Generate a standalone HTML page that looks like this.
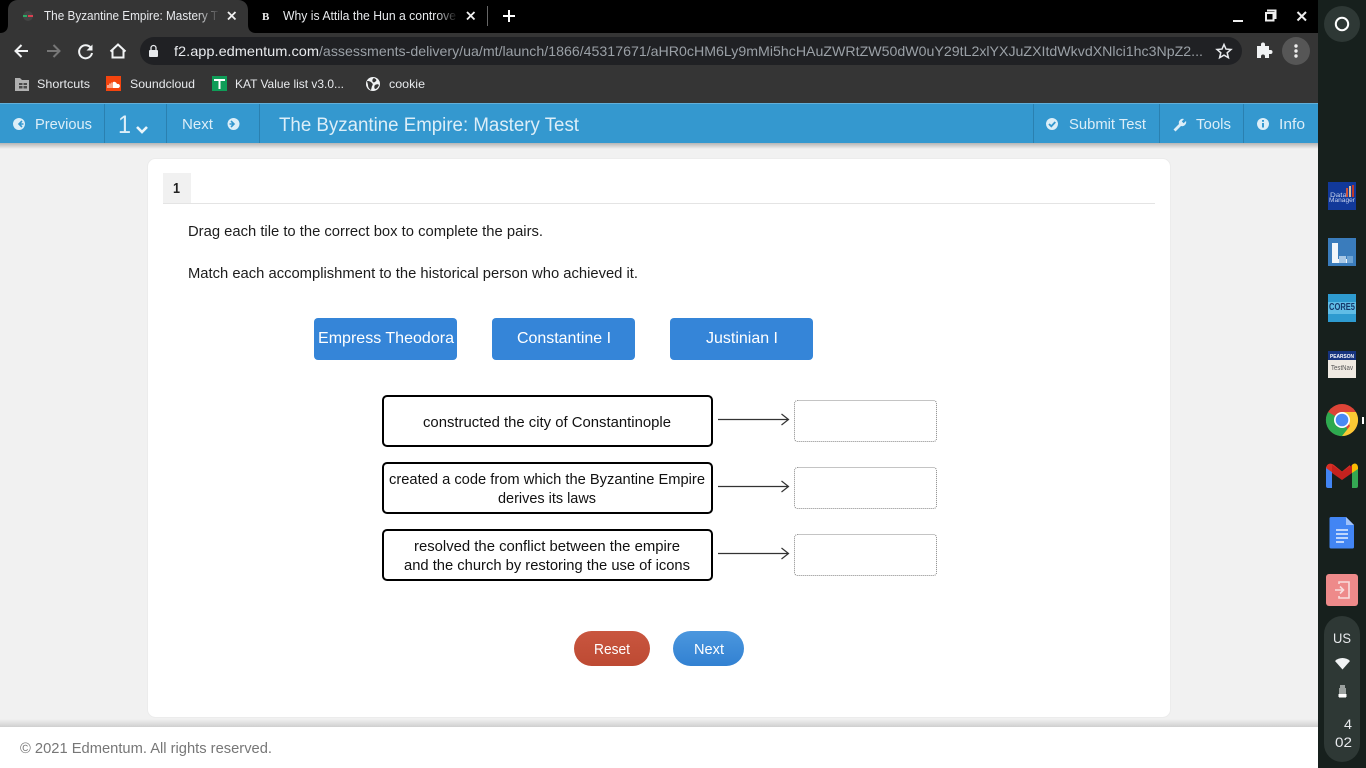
<!DOCTYPE html>
<html lang="en"><head><meta charset="utf-8"><title>The Byzantine Empire: Mastery Test</title>
<style>html,body{margin:0;padding:0;width:1366px;height:768px;overflow:hidden;background:#fff}svg{display:block}
text{font-family:"Liberation Sans",sans-serif;white-space:pre}</style></head><body>
<svg xmlns="http://www.w3.org/2000/svg" width="1366" height="768" viewBox="0 0 1366 768">
<defs>
<linearGradient id="f1" x1="0" x2="1" y1="0" y2="0"><stop offset="0" stop-color="#353535" stop-opacity="0"/><stop offset="1" stop-color="#353535"/></linearGradient>
<linearGradient id="f2" x1="0" x2="1" y1="0" y2="0"><stop offset="0" stop-color="#000" stop-opacity="0"/><stop offset="1" stop-color="#000"/></linearGradient>
<linearGradient id="rb" x1="0" x2="0" y1="0" y2="1"><stop offset="0" stop-color="#c9563f"/><stop offset="1" stop-color="#bd4a33"/></linearGradient>
<linearGradient id="nb" x1="0" x2="0" y1="0" y2="1"><stop offset="0" stop-color="#4b97de"/><stop offset="1" stop-color="#3281d2"/></linearGradient>
<linearGradient id="sh" x1="0" x2="0" y1="0" y2="1"><stop offset="0" stop-color="#b5b5b5"/><stop offset="1" stop-color="#f1f1f1"/></linearGradient>
<linearGradient id="fs" x1="0" x2="0" y1="0" y2="1"><stop offset="0" stop-color="#f1f1f1"/><stop offset="1" stop-color="#cfcfcf"/></linearGradient>
</defs>
<!-- page -->
<rect width="1318" height="768" fill="#f1f1f1"/>
<!-- chrome -->
<rect width="1318" height="33" fill="#000"/>
<rect y="33" width="1318" height="70" fill="#353535"/>
<path d="M0 33C5 33 8 30 8 25V10C8 4 12 0 18 0H238C244 0 248 4 248 10V25C248 30 251 33 256 33Z" fill="#353535"/>
<circle cx="28" cy="16" r="5" fill="#444"/><rect x="23" y="15" width="4" height="2" fill="#2fa866"/><rect x="28" y="15" width="5" height="2" fill="#d94050"/>
<text x="44" y="20" font-size="12.500" fill="#e8eaed" textLength="174" lengthAdjust="spacingAndGlyphs">The Byzantine Empire: Mastery T</text>
<rect x="197" y="6" width="23" height="20" fill="url(#f1)"/>
<path d="M228 12l7.500 7.500M235.500 12L228 19.500" stroke="#f0f0f0" stroke-width="1.800" fill="none"/>
<text x="262" y="20" font-size="11" font-weight="bold" fill="#eee" style="font-family:'Liberation Serif',serif">B</text>
<text x="283" y="20" font-size="12.500" fill="#e8eaed" textLength="173" lengthAdjust="spacingAndGlyphs">Why is Attila the Hun a controve</text>
<rect x="436" y="6" width="22" height="20" fill="url(#f2)"/>
<path d="M467 12l7.500 7.500M474.500 12L467 19.500" stroke="#f0f0f0" stroke-width="1.800" fill="none"/>
<rect x="487" y="6" width="1" height="20" fill="#666"/>
<path d="M509 10v12M503 16h12" stroke="#fff" stroke-width="2"/>
<rect x="1233" y="20" width="10" height="2" fill="#eee"/>
<path d="M1268 11.500v-1h7.500v7.500h-1.500" fill="none" stroke="#eee" stroke-width="2"/><rect x="1266" y="13" width="7.500" height="7.500" fill="none" stroke="#eee" stroke-width="2"/>
<path d="M1297.500 12l8.500 8.500M1306 12l-8.500 8.500" stroke="#eee" stroke-width="2"/>
<!-- toolbar icons -->
<path d="M28 51H16M21.500 45L15.500 51L21.500 57" fill="none" stroke="#f1f3f4" stroke-width="2"/>
<path d="M47 51H59M53.500 45L59.500 51L53.500 57" fill="none" stroke="#777" stroke-width="2"/>
<path d="M90.500 47.500A6.500 6.500 0 1 0 92 53" fill="none" stroke="#f1f3f4" stroke-width="2"/><path d="M92.500 44.500v6h-6z" fill="#f1f3f4"/>
<path d="M110.500 51.500L118 44.500L125.500 51.500M112.500 50v7.500h11V50" fill="none" stroke="#f1f3f4" stroke-width="2"/>
<rect x="140" y="37" width="1102" height="28" rx="14" fill="#202124"/>
<rect x="149" y="50" width="9" height="7" rx="1" fill="#e8eaed"/><path d="M151 50v-2a2.500 2.500 0 0 1 5 0v2" fill="none" stroke="#e8eaed" stroke-width="1.300"/>
<text x="174" y="56" font-size="14" fill="#e8eaed" textLength="145" lengthAdjust="spacingAndGlyphs">f2.app.edmentum.com</text>
<text x="319" y="56" font-size="14" fill="#9aa0a6" textLength="884" lengthAdjust="spacingAndGlyphs">/assessments-delivery/ua/mt/launch/1866/45317671/aHR0cHM6Ly9mMi5hcHAuZWRtZW50dW0uY29tL2xlYXJuZXItdWkvdXNlci1hc3NpZ2...</text>
<path d="M1224 44.500l2 4.600 5 .4-3.800 3.300 1.200 4.900-4.400-2.600-4.400 2.600 1.200-4.900-3.800-3.300 5-.4z" fill="none" stroke="#e8eaed" stroke-width="1.500"/>
<path d="M1258 47h4v-1.500a2 2 0 0 1 4 0V47h4v4h1.500a2 2 0 0 1 0 4H1270v4h-4v-1.500a2 2 0 0 0-4 0V59h-4z" fill="#f1f3f4" transform="translate(-1 -1)"/>
<circle cx="1296" cy="51" r="14" fill="#565656"/>
<circle cx="1296" cy="46" r="1.700" fill="#eee"/><circle cx="1296" cy="51" r="1.700" fill="#eee"/><circle cx="1296" cy="56" r="1.700" fill="#eee"/>
<!-- bookmarks -->
<path d="M15 78h5l2 2h7v11H15z" fill="#b0b0b0"/><rect x="19" y="83" width="8" height="5.500" fill="#4a4a4a"/><path d="M23 83v5.500M19 85.500h8" stroke="#b0b0b0"/>
<text x="37" y="88" font-size="12" fill="#e8eaed" textLength="53" lengthAdjust="spacingAndGlyphs">Shortcuts</text>
<rect x="106" y="76" width="15" height="15" fill="#f4440e"/><path d="M108 88v-3M110 88v-4.500M112 88v-5.500" stroke="#fff"/><path d="M113 88v-6a3 3 0 0 1 4 2a2 2 0 0 1 1.500 4z" fill="#fff"/>
<text x="130" y="88" font-size="12" fill="#e8eaed" textLength="65" lengthAdjust="spacingAndGlyphs">Soundcloud</text>
<rect x="212" y="76" width="15" height="15" fill="#0f9d58"/><path d="M214 80h11M219.500 80v9" stroke="#fff" stroke-width="2"/>
<text x="235" y="88" font-size="12" fill="#e8eaed" textLength="109" lengthAdjust="spacingAndGlyphs">KAT Value list v3.0...</text>
<circle cx="373" cy="84" r="7" fill="#f1f3f4"/><path d="M367 81c3 0 4 1 5 2s1 2 0 3l-1 4c-2-1-3-3-3-5zM374 78c2 1 3 2 2 3s-2 2-3 1-1-3 1-4zM375 85c2-1 3-1 4 0-1 2-2 4-4 4-1-1-1-3 0-4z" fill="#353535"/>
<text x="389" y="88" font-size="12" fill="#e8eaed" textLength="36" lengthAdjust="spacingAndGlyphs">cookie</text>
<!-- nav -->
<rect y="143" width="1318" height="6" fill="url(#sh)"/>
<rect y="103" width="1318" height="40" fill="#3498cf"/>
<rect y="103" width="1318" height="1" fill="#62b0da"/>
<g fill="#2a80b0"><rect x="104" y="104" width="1" height="39"/><rect x="166" y="104" width="1" height="39"/><rect x="259" y="104" width="1" height="39"/><rect x="1033" y="104" width="1" height="39"/><rect x="1159" y="104" width="1" height="39"/><rect x="1243" y="104" width="1" height="39"/></g>
<g fill="#dceef8">
<circle cx="19" cy="124" r="6"/>
<text x="35" y="129" font-size="15" textLength="57" lengthAdjust="spacingAndGlyphs">Previous</text>
<text x="118" y="133" font-size="25" textLength="13" lengthAdjust="spacingAndGlyphs">1</text>
<text x="182" y="129" font-size="15" textLength="31" lengthAdjust="spacingAndGlyphs">Next</text>
<circle cx="233.500" cy="124" r="6"/>
<text x="279" y="131" font-size="19" textLength="300" lengthAdjust="spacingAndGlyphs">The Byzantine Empire: Mastery Test</text>
<circle cx="1052" cy="124" r="6"/>
<text x="1069" y="129" font-size="15" textLength="77" lengthAdjust="spacingAndGlyphs">Submit Test</text>
<text x="1196" y="129" font-size="15" textLength="35" lengthAdjust="spacingAndGlyphs">Tools</text>
<circle cx="1263" cy="124" r="6"/>
<text x="1279" y="129" font-size="15" textLength="26" lengthAdjust="spacingAndGlyphs">Info</text>
</g>
<path d="M22 121l-3 3 3 3M19.500 124h4" fill="none" stroke="#3498cf" stroke-width="1.600"/>
<path d="M137 127l5 5 5-5" fill="none" stroke="#eaf5fb" stroke-width="2.600"/>
<path d="M231 121l3 3-3 3M233.500 124h-4" fill="none" stroke="#3498cf" stroke-width="1.600"/>
<path d="M1049 124l2.300 2.300 4-4.300" fill="none" stroke="#3498cf" stroke-width="1.800"/>
<path d="M1173.500 129.500l5.500-5.500a4 4 0 0 1 5-5l-2.200 2.400 1.800 1.800 2.400-2.200a4 4 0 0 1-5 5l-5.500 5.500z" fill="#dceef8"/>
<rect x="1262" y="123" width="2" height="4.500" fill="#3498cf"/><rect x="1262" y="120" width="2" height="1.800" fill="#3498cf"/>
<!-- card -->
<rect x="147.500" y="158.500" width="1023" height="559" rx="8" fill="#fff" stroke="#ececec"/>
<rect x="163" y="173" width="28" height="30" fill="#f1f1f1"/>
<rect x="163" y="203" width="992" height="1" fill="#e4e4e4"/>
<text x="173" y="193" font-size="15" font-weight="bold" fill="#222" textLength="7" lengthAdjust="spacingAndGlyphs">1</text>
<text x="188" y="236" font-size="15" fill="#1c1c1c" textLength="355" lengthAdjust="spacingAndGlyphs">Drag each tile to the correct box to complete the pairs.</text>
<text x="188" y="278" font-size="15" fill="#1c1c1c" textLength="450" lengthAdjust="spacingAndGlyphs">Match each accomplishment to the historical person who achieved it.</text>
<!-- tiles -->
<g fill="#3585d8"><rect x="314" y="318" width="143" height="42" rx="4"/><rect x="492" y="318" width="143" height="42" rx="4"/><rect x="670" y="318" width="143" height="42" rx="4"/></g>
<g fill="#fff" font-size="16">
<text x="318" y="343" textLength="136" lengthAdjust="spacingAndGlyphs">Empress Theodora</text>
<text x="517" y="343" textLength="94" lengthAdjust="spacingAndGlyphs">Constantine I</text>
<text x="706" y="343" textLength="72" lengthAdjust="spacingAndGlyphs">Justinian I</text>
</g>
<!-- pairs -->
<g fill="#fff" stroke="#000" stroke-width="2">
<rect x="383" y="396" width="329" height="50" rx="4"/>
<rect x="383" y="463" width="329" height="50" rx="4"/>
<rect x="383" y="530" width="329" height="50" rx="4"/>
</g>
<g fill="#111" font-size="15">
<text x="423" y="427" textLength="248" lengthAdjust="spacingAndGlyphs">constructed the city of Constantinople</text>
<text x="389" y="484" textLength="316" lengthAdjust="spacingAndGlyphs">created a code from which the Byzantine Empire</text>
<text x="498" y="503" textLength="98" lengthAdjust="spacingAndGlyphs">derives its laws</text>
<text x="414" y="551" textLength="266" lengthAdjust="spacingAndGlyphs">resolved the conflict between the empire</text>
<text x="404" y="570" textLength="286" lengthAdjust="spacingAndGlyphs">and the church by restoring the use of icons</text>
</g>
<g fill="none" stroke="#333" stroke-width="1.200">
<path d="M718 419.500H788M781.500 414L788.500 419.500L781.500 425"/>
<path d="M718 486.500H788M781.500 481L788.500 486.500L781.500 492"/>
<path d="M718 553.500H788M781.500 548L788.500 553.500L781.500 559"/>
</g>
<g fill="#fff" stroke="#888" stroke-dasharray="1 1">
<rect x="794.500" y="400.500" width="142" height="41" rx="3"/>
<rect x="794.500" y="467.500" width="142" height="41" rx="3"/>
<rect x="794.500" y="534.500" width="142" height="41" rx="3"/>
</g>
<!-- buttons -->
<rect x="574" y="631" width="76" height="35" rx="17.500" fill="url(#rb)"/>
<rect x="673" y="631" width="71" height="35" rx="17.500" fill="url(#nb)"/>
<text x="594" y="654" font-size="15" fill="#fff" textLength="36" lengthAdjust="spacingAndGlyphs">Reset</text>
<text x="694" y="654" font-size="15" fill="#fff" textLength="30" lengthAdjust="spacingAndGlyphs">Next</text>
<!-- footer -->
<rect y="719" width="1318" height="8" fill="url(#fs)"/>
<rect y="727" width="1318" height="41" fill="#fff"/>
<text x="20" y="753" font-size="15" fill="#777" textLength="252" lengthAdjust="spacingAndGlyphs">© 2021 Edmentum. All rights reserved.</text>
<!-- shelf -->
<rect x="1318" width="48" height="768" fill="#17201d"/>
<circle cx="1342" cy="24" r="18" fill="#2e3835"/>
<circle cx="1342" cy="24" r="6.200" fill="none" stroke="#fff" stroke-width="2"/>
<rect x="1328" y="182" width="28" height="28" fill="#12399a"/>
<g fill="#c8d4ee" font-size="6"><text x="1330" y="197" textLength="17" lengthAdjust="spacingAndGlyphs">Data</text><text x="1329" y="202" textLength="26" lengthAdjust="spacingAndGlyphs">Manager</text></g>
<rect x="1346" y="188" width="2" height="9" fill="#d0553c"/><rect x="1349" y="186" width="2" height="11" fill="#d9c2a0"/><rect x="1352" y="185" width="2" height="12" fill="#c0392b"/>
<rect x="1328" y="238" width="28" height="28" fill="#3a7cbc"/>
<path d="M1332 243h6v16h13v4h-19z" fill="#f2f6fa"/><rect x="1339" y="256" width="7" height="7" fill="#a8c8e6"/><rect x="1347" y="256" width="6" height="7" fill="#6da3d4"/>
<rect x="1328" y="294" width="28" height="28" fill="#2e9bd0"/><rect x="1328" y="302" width="28" height="12" fill="#60bde6"/>
<text x="1329" y="310" font-size="10" font-weight="bold" fill="#14386a" textLength="26" lengthAdjust="spacingAndGlyphs">CORE5</text>
<rect x="1328" y="351" width="28" height="27" fill="#efeae2"/><rect x="1328" y="351" width="28" height="9" fill="#16337f"/>
<text x="1330" y="358" font-size="5.500" font-weight="bold" fill="#fff" textLength="24" lengthAdjust="spacingAndGlyphs">PEARSON</text>
<text x="1331" y="370" font-size="7" fill="#555" textLength="22" lengthAdjust="spacingAndGlyphs">TestNav</text>
<!-- chrome logo -->
<circle cx="1342" cy="420" r="16" fill="#dd4437"/>
<path d="M1328.100 412A16 16 0 0 0 1350 433.900L1342 420z" fill="#2da94f"/>
<path d="M1342 412H1355.900A16 16 0 0 1 1342 436L1350 426z" fill="#fcc934"/>
<circle cx="1342" cy="420" r="8" fill="#fff"/><circle cx="1342" cy="420" r="6.300" fill="#4a8af4"/>
<rect x="1362" y="417" width="2" height="7" fill="#fff"/>
<!-- gmail -->
<path d="M1326 482v-15l6 0v21h-4a2 2 0 0 1-2-2z" fill="#4285f4"/>
<path d="M1352 467h6v19a2 2 0 0 1-2 2h-4z" fill="#34a853"/>
<path d="M1326 469c0-5 4-7 8-4l8 6.500 8-6.500 0 8-8 6-16-11z" fill="#d93025"/>
<path d="M1332 465l10 7 10-7v8l-10 7-10-7z" fill="#c5221f"/>
<path d="M1352 473v-8c3-3 6-1 6 3v1z" fill="#fbbc04"/>
<!-- docs -->
<path d="M1331 517h15l8 8v22a1.500 1.500 0 0 1-1.500 1.500h-21.500a1.500 1.500 0 0 1-1.500-1.500v-28.500a1.500 1.500 0 0 1 1.500-1.500z" fill="#4285f4"/>
<path d="M1346 517l8 8h-8z" fill="#a1c2fa"/>
<path d="M1336 530h12M1336 534h12M1336 538h12M1336 542h8" stroke="#e8f0fe" stroke-width="1.400"/>
<!-- exit -->
<rect x="1326" y="574" width="32" height="32" rx="3" fill="#ee8a8a"/>
<path d="M1339 584v-2h10v16h-10v-2M1335 590h8M1340 586.500l3.500 3.500-3.500 3.500" fill="none" stroke="#f9dcdc" stroke-width="1.600"/>
<!-- status -->
<rect x="1324" y="616" width="36" height="146" rx="18" fill="#2e3835"/>
<g fill="#e8eaed" font-size="14">
<text x="1333" y="643" font-size="14" textLength="18" lengthAdjust="spacingAndGlyphs">US</text>
<text x="1344" y="729" font-size="14" textLength="8" lengthAdjust="spacingAndGlyphs">4</text>
<text x="1335" y="747" font-size="14" textLength="17" lengthAdjust="spacingAndGlyphs">02</text>
</g>
<path d="M1335 661a11 11 0 0 1 15 0l-7.500 8.500z" fill="#f1f3f4"/>
<path d="M1340 688v-3h5v3h1v10h-7v-10z" fill="#9aa09e"/><rect x="1338.500" y="694" width="8" height="3" fill="#fff"/>
</svg>
</body></html>
